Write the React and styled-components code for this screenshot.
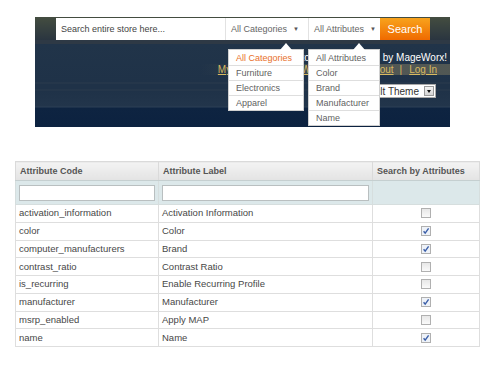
import React from 'react'
import styled, { createGlobalStyle } from 'styled-components'

const Global = createGlobalStyle`
  body {
    margin: 0;
    background: #fff;
    font-family: "Liberation Sans", Arial, sans-serif;
  }
`;

const Page = styled.div`
  width: 491px;
  height: 367px;
  display: flex;
  flex-direction: column;
  overflow: hidden;
`;

const Banner = styled.div`
  position: relative;
  margin: 17px 0 0 35px;
  width: 415px;
  height: 110px;
  display: flex;
  flex-direction: column;
  background: linear-gradient(to bottom,
    #444d40 0px, #2a3540 23px,
    #2e3945 23px, #2e3945 27px,
    #213449 27px, #1f3248 65px,
    #2b3b4d 66px, #1f3248 67px,
    #1f3248 72px, #2a3a4c 73px, #1f3248 74px,
    #22354b 89px, #2c3f55 90px,
    #0e2441 91px, #0c2240 110px);
`;

const SearchRow = styled.div`
  display: flex;
  height: 22px;
  margin-top: 1px;
  padding-left: 21px;
`;

const SearchInput = styled.div`
  width: 164px;
  padding-left: 5px;
  background: #fff;
  color: #444;
  font-size: 9px;
  display: flex;
  align-items: center;
`;

const Select = styled.div`
  width: ${p => p.$w}px;
  box-sizing: border-box;
  padding-left: 5px;
  background: #fff;
  border-left: 1px solid #e2e2e2;
  color: #666;
  font-size: 9px;
  display: flex;
  align-items: center;
  gap: 6px;
`;

const Caret = styled.span`
  font-size: 6px;
  color: #555;
`;

const SearchButton = styled.div`
  width: 50px;
  background: linear-gradient(to bottom, #f8a31c, #ef6a00);
  color: #fff;
  font-size: 11px;
  display: flex;
  align-items: center;
  justify-content: center;
`;

const InfoLine = styled.div`
  display: flex;
  justify-content: flex-end;
  align-items: center;
  height: ${p => p.$h}px;
  margin-top: ${p => p.$mt}px;
  padding-right: ${p => p.$pr}px;
  font-size: 10px;
  color: #fff;
  white-space: nowrap;
`;

const LinksLine = styled(InfoLine)`
  background: linear-gradient(to right, rgba(90, 94, 86, 0) 40%, rgba(90, 94, 86, 0.85) 80%);
  color: #d8b960;
`;

const Link = styled.span`
  color: #d8b960;
  text-decoration: underline;
`;

const Sep = styled.span`
  margin: 0 7px 0 6px;
`;

const ThemeSelect = styled.div`
  display: flex;
  align-items: center;
  justify-content: flex-end;
  gap: 5px;
  height: 14px;
  background: #fff;
  border: 1px solid #aaa;
  box-sizing: border-box;
  color: #333;
  font-size: 10px;
  padding-left: 3px;
`;

const ThemeArrow = styled.div`
  width: 10px;
  height: 10px;
  margin-right: 1px;
  background: linear-gradient(#f4f4f4, #d4d4d4);
  border: 1px solid #999;
  box-sizing: border-box;
  display: flex;
  align-items: center;
  justify-content: center;
  &::after {
    content: '';
    border-left: 2.5px solid transparent;
    border-right: 2.5px solid transparent;
    border-top: 3px solid #111;
  }
`;

const Menu = styled.div`
  position: absolute;
  top: 32px;
  left: ${p => p.$left}px;
  width: ${p => p.$w}px;
  background: #fff;
  border: 1px solid #d0d0d0;
  box-sizing: border-box;
  &::before {
    content: '';
    position: absolute;
    top: -7px;
    left: ${p => p.$tip}px;
    border-left: 6px solid transparent;
    border-right: 6px solid transparent;
    border-bottom: 7px solid #fff;
  }
`;

const MenuItem = styled.div`
  height: 15px;
  box-sizing: border-box;
  padding-left: 7px;
  display: flex;
  align-items: center;
  font-size: 9px;
  color: ${p => (p.$active ? '#e8702a' : '#5f5f5f')};
  border-top: ${p => (p.$first ? 'none' : '1px solid #dedede')};
`;

const Grid = styled.table`
  margin: 34px 0 0 15px;
  width: 464px;
  border-collapse: collapse;
  table-layout: fixed;
  font-size: 9.5px;
  color: #474747;
`;

const Head = styled.th`
  height: 19px;
  box-sizing: border-box;
  padding: 0 4px;
  text-align: left;
  font-size: 9px;
  font-weight: bold;
  color: #555;
  background: linear-gradient(#f3f3f3, #e3e3e3);
  border: 1px solid #dadada;
  border-bottom: 1px solid #c5cfd0;
`;

const FilterCell = styled.td`
  height: 24px;
  padding: 3px;
  box-sizing: border-box;
  background: #dce8ea;
  border: 1px solid #d6dede;
`;

const FilterInput = styled.div`
  height: 16px;
  background: #fff;
  border: 1px solid #b9bfc0;
  box-sizing: border-box;
`;

const Cell = styled.td`
  height: 17.75px;
  box-sizing: border-box;
  padding: 0 3px;
  border: 1px solid #dedede;
  white-space: nowrap;
  overflow: hidden;
  text-align: ${p => (p.$center ? 'center' : 'left')};
  line-height: 10px;
`;

const Box = styled.svg`
  display: block;
  margin: 0 auto;
`;

function Check({ on }) {
  return (
    <Box width="10" height="10" viewBox="0 0 10 10">
      <defs>
        <linearGradient id="cbg" x1="0" y1="0" x2="0" y2="1">
          <stop offset="0" stopColor="#e6e6e6" />
          <stop offset="1" stopColor="#fbfbfb" />
        </linearGradient>
      </defs>
      <rect x="0.5" y="0.5" width="9" height="9" fill={on ? '#eef2f8' : 'url(#cbg)'} stroke="#b0b0b0" />
      {on && <path d="M2.6 5.2 L4.2 7.2 L7.6 2.4" fill="none" stroke="#3a5ea8" strokeWidth="1.4" />}
    </Box>
  );
}

const rows = [
  ['activation_information', 'Activation Information', false],
  ['color', 'Color', true],
  ['computer_manufacturers', 'Brand', true],
  ['contrast_ratio', 'Contrast Ratio', false],
  ['is_recurring', 'Enable Recurring Profile', false],
  ['manufacturer', 'Manufacturer', true],
  ['msrp_enabled', 'Apply MAP', false],
  ['name', 'Name', true],
];

const categories = ['All Categories', 'Furniture', 'Electronics', 'Apparel'];
const attributes = ['All Attributes', 'Color', 'Brand', 'Manufacturer', 'Name'];

export default function App() {
  return (
    <Page>
      <Global />
      <Banner>
        <SearchRow>
          <SearchInput>Search entire store here...</SearchInput>
          <Select $w={83}>All Categories <Caret>▼</Caret></Select>
          <Select $w={72}>All Attributes <Caret>▼</Caret></Select>
          <SearchButton>Search</SearchButton>
        </SearchRow>
        <InfoLine $h={12} $mt={11} $pr={3}>Welcome to our demo store by MageWorx!</InfoLine>
        <LinksLine $h={11} $mt={1} $pr={13}>
          <Link>My Account</Link><Sep>|</Sep>
          <Link>My Wishlist</Link><Sep>|</Sep>
          <Link>Checkout</Link><Sep>|</Sep>
          <Link>Log In</Link>
        </LinksLine>
        <InfoLine $h={14} $mt={9} $pr={14}>
          <ThemeSelect>Default Theme<ThemeArrow /></ThemeSelect>
        </InfoLine>
        <Menu $left={193} $w={76} $tip={51}>
          {categories.map((c, i) => (
            <MenuItem key={c} $first={i === 0} $active={i === 0}>{c}</MenuItem>
          ))}
        </Menu>
        <Menu $left={273} $w={72} $tip={44}>
          {attributes.map((a, i) => (
            <MenuItem key={a} $first={i === 0}>{a}</MenuItem>
          ))}
        </Menu>
      </Banner>
      <Grid>
        <colgroup>
          <col style={{ width: 143 }} />
          <col style={{ width: 214 }} />
          <col style={{ width: 107 }} />
        </colgroup>
        <thead>
          <tr>
            <Head>Attribute Code</Head>
            <Head>Attribute Label</Head>
            <Head>Search by Attributes</Head>
          </tr>
          <tr>
            <FilterCell><FilterInput /></FilterCell>
            <FilterCell><FilterInput /></FilterCell>
            <FilterCell />
          </tr>
        </thead>
        <tbody>
          {rows.map(([code, label, on]) => (
            <tr key={code}>
              <Cell>{code}</Cell>
              <Cell>{label}</Cell>
              <Cell $center><Check on={on} /></Cell>
            </tr>
          ))}
        </tbody>
      </Grid>
    </Page>
  );
}
